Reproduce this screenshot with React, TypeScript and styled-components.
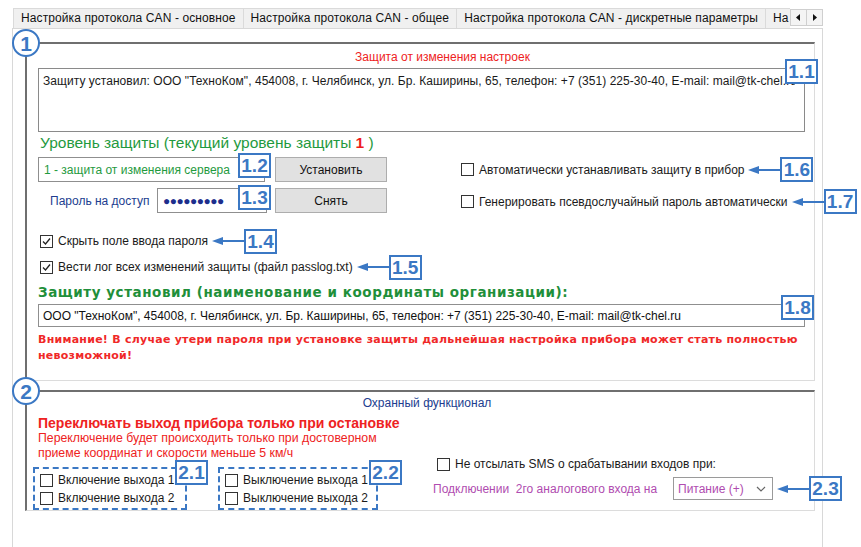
import React from 'react';
import styled, { createGlobalStyle } from 'styled-components';

const GlobalStyle = createGlobalStyle`
  html, body {
    margin: 0;
    padding: 0;
    background: #ffffff;
    font-family: 'Liberation Sans', Arial, sans-serif;
    font-size: 12px;
    color: #1a1a1a;
  }
`;

const accent = '#3b78c4';

const Page = styled.div`
  width: 861px;
  height: 547px;
  overflow: hidden;
  padding: 8px 0 0 12px;
  box-sizing: border-box;
`;

const TabStrip = styled.div`
  display: flex;
  align-items: flex-start;
  width: 811px;
  height: 20px;
`;

const TabRow = styled.div`
  display: flex;
  width: 777px;
  height: 20px;
  overflow: hidden;
  padding-left: 1px;
`;

const Tab = styled.div`
  flex: none;
  height: 19px;
  line-height: 19px;
  padding: 0 7px;
  background: #f0f0f0;
  border: 1px solid #dadada;
  border-bottom: none;
  margin-right: -1px;
  white-space: nowrap;
  letter-spacing: 0.1px;
  color: #111;
`;

const ScrollButtons = styled.div`
  display: flex;
  margin-top: 1px;
`;

const ScrollBtn = styled.div`
  width: 15px;
  height: 15px;
  border: 1px solid #cfcfcf;
  background: #f4f4f4;
  margin-right: -1px;
  display: flex;
  align-items: center;
  justify-content: center;
`;

const Panel = styled.div`
  width: 811px;
  height: 540px;
  box-sizing: border-box;
  border: 1px solid #d8d8d8;
  padding: 13px 7px 0 12px;
`;

const GroupBox = styled.section<{ $mb?: number }>`
  position: relative;
  border-top: 2px solid #6f6f6f;
  border-left: 2px solid #6f6f6f;
  border-right: 1px solid #dcdcdc;
  border-bottom: 1px solid #dcdcdc;
  padding: 0 9px 0 11px;
  margin-bottom: ${({ $mb }) => $mb ?? 0}px;
`;

const Marker = styled.div`
  position: absolute;
  left: -15px;
  top: -15px;
  width: 24px;
  height: 24px;
  border: 2px solid ${accent};
  border-radius: 50%;
  background: #fff;
  color: ${accent};
  font: bold 21px 'Liberation Sans', Arial, sans-serif;
  display: flex;
  align-items: center;
  justify-content: center;
  line-height: 1;
`;

const GroupTitle = styled.div<{ $color: string; $shift: number; $top: number }>`
  text-align: center;
  color: ${({ $color }) => $color};
  line-height: 14px;
  padding-top: ${({ $top }) => $top}px;
  padding-left: ${({ $shift }) => $shift}px;
`;

const Tag = styled.div`
  flex: none;
  width: 29px;
  height: 21px;
  border: 2px solid ${accent};
  background: #fff;
  color: ${accent};
  font: bold 19px 'Liberation Sans', Arial, sans-serif;
  line-height: 21px;
  text-align: center;
`;

const FloatTag = styled(Tag)<{ $right: number; $top: number }>`
  position: absolute;
  right: ${({ $right }) => $right}px;
  top: ${({ $top }) => $top}px;
`;

const Memo = styled.div`
  position: relative;
  margin-top: 4px;
  height: 64px;
  box-sizing: border-box;
  border: 1px solid #8a8a8a;
  padding: 5px 4px;
  white-space: nowrap;
  line-height: 14px;
`;

const MemoText = styled.div`
  overflow: hidden;
  width: 752px;
  letter-spacing: 0.05px;
`;

const LevelTitle = styled.div`
  margin-top: 3px;
  padding-left: 2px;
  font-size: 15.5px;
  line-height: 16px;
  color: #1f9a3e;
`;

const LevelNum = styled.b`
  color: #ee1c1c;
  font-weight: bold;
`;

const Columns = styled.div`
  display: grid;
  grid-template-columns: 423px 1fr;
  margin-top: 6px;
`;

const Stack = styled.div<{ $gap: number }>`
  display: flex;
  flex-direction: column;
  gap: ${({ $gap }) => $gap}px;
`;

const CheckStack = styled(Stack)`
  margin-top: 14px;
  padding-left: 2px;
`;

const FieldRow = styled.div<{ $gap: number }>`
  display: flex;
  align-items: center;
  gap: ${({ $gap }) => $gap}px;
`;

const Field = styled.div<{ $w: number; $h?: number; $color?: string }>`
  position: relative;
  width: ${({ $w }) => $w}px;
  height: ${({ $h }) => $h ?? 25}px;
  box-sizing: border-box;
  border: 1px solid #8f8f8f;
  background: #fff;
  display: flex;
  align-items: center;
  padding: 0 5px;
  color: ${({ $color }) => $color ?? '#111'};
  white-space: nowrap;
`;

const OrgField = styled(Field)`
  margin-top: 4px;
  padding: 0 4px;
`;

const Dots = styled.span`
  color: #1d2e8c;
  font-size: 12px;
  letter-spacing: -0.5px;
`;

const Button = styled.div`
  width: 112px;
  height: 25px;
  box-sizing: border-box;
  background: #e1e1e1;
  border: 1px solid #adadad;
  display: flex;
  align-items: center;
  justify-content: center;
  color: #111;
`;

const FieldLabel = styled.span<{ $color: string; $w: number; $pl?: number }>`
  color: ${({ $color }) => $color};
  white-space: nowrap;
  width: ${({ $w }) => $w}px;
  padding-left: ${({ $pl }) => $pl ?? 0}px;
`;

const CheckRow = styled.div<{ $h: number; $pl?: number }>`
  display: flex;
  align-items: center;
  height: ${({ $h }) => $h}px;
  padding-left: ${({ $pl }) => $pl ?? 0}px;
  white-space: nowrap;
`;

const Box = styled.span`
  flex: none;
  width: 13px;
  height: 13px;
  box-sizing: border-box;
  border: 1px solid #333;
  background: #fff;
  margin-right: 5px;
  display: flex;
  align-items: center;
  justify-content: center;
`;

const ArrowWrap = styled.span`
  display: flex;
  margin: 0 0 0 4px;
`;

const Heading = styled.div`
  margin-top: 4px;
  font: bold 13.5px 'DejaVu Sans', Verdana, sans-serif;
  line-height: 16px;
  color: #1f8f3a;
  letter-spacing: 0.55px;
`;

const Warning = styled.div`
  margin-top: 5px;
  padding-bottom: 16px;
  font: bold 11px 'DejaVu Sans', Verdana, sans-serif;
  line-height: 16px;
  color: #f02828;
  letter-spacing: 0.25px;
`;

const StopTitle = styled.div`
  margin-top: 5px;
  font-weight: bold;
  font-size: 14px;
  line-height: 16px;
  color: #ee2222;
`;

const StopNote = styled.div`
  color: #ee2222;
  line-height: 15px;
  font-size: 12.3px;
`;

const Outputs = styled.div`
  display: flex;
  gap: 31px;
  margin: 6px 0 0 -5px;
`;

const DashedBox = styled.div<{ $w: number }>`
  position: relative;
  width: ${({ $w }) => $w}px;
  height: 43px;
  box-sizing: border-box;
  border: 2px dashed ${accent};
  padding: 2px 0 0 5px;
`;

const Group2Body = styled.div`
  display: grid;
  grid-template-columns: 395px 1fr;
`;

const RightBottom = styled.div`
  display: flex;
  flex-direction: column;
  justify-content: flex-end;
  padding-bottom: 9px;
`;

const SelectRow = styled(FieldRow)`
  margin-top: 4px;
`;

const Select = styled.div`
  width: 100px;
  height: 23px;
  box-sizing: border-box;
  border: 1px solid #9a9a9a;
  display: flex;
  align-items: center;
  justify-content: space-between;
  padding: 0 6px 0 4px;
  color: #b04cb0;
`;

const Check = ({ on }: { on?: boolean }) => (
  <Box>
    {on && (
      <svg width="11" height="11" viewBox="0 0 11 11">
        <path d="M2 5.5 L4.5 8 L9 2.5" fill="none" stroke="#222" strokeWidth="1.3" />
      </svg>
    )}
  </Box>
);

const Arrow = ({ w }: { w: number }) => (
  <ArrowWrap>
    <svg width={w} height="10" viewBox={`0 0 ${w} 10`}>
      <line x1="8" y1="5" x2={w} y2="5" stroke={accent} strokeWidth="2" />
      <polygon points="0,5 11,1 11,9" fill={accent} />
    </svg>
  </ArrowWrap>
);

const Triangle = ({ dir }: { dir: 'l' | 'r' }) => (
  <svg width="5" height="7" viewBox="0 0 5 7">
    <polygon points={dir === 'l' ? '4,0 4,7 0,3.5' : '1,0 1,7 5,3.5'} fill="#111" />
  </svg>
);

export default function App() {
  return (
    <Page>
      <GlobalStyle />
      <TabStrip>
        <TabRow>
          <Tab>Настройка протокола CAN - основное</Tab>
          <Tab>Настройка протокола CAN - общее</Tab>
          <Tab>Настройка протокола CAN - дискретные параметры</Tab>
          <Tab>На</Tab>
        </TabRow>
        <ScrollButtons>
          <ScrollBtn><Triangle dir="l" /></ScrollBtn>
          <ScrollBtn><Triangle dir="r" /></ScrollBtn>
        </ScrollButtons>
      </TabStrip>

      <Panel>
        <GroupBox $mb={9}>
          <Marker>1</Marker>
          <GroupTitle $color="#ee2222" $shift={42} $top={6}>
            Защита от изменения настроек
          </GroupTitle>
          <Memo>
            <MemoText>
              Защиту установил: ООО "ТехноКом", 454008, г. Челябинск, ул. Бр. Каширины, 65, телефон: +7 (351) 225-30-40, E-mail: mail@tk-chel.ru
            </MemoText>
            <FloatTag $right={-14} $top={-10}>1.1</FloatTag>
          </Memo>

          <LevelTitle>
            Уровень защиты (текущий уровень защиты <LevelNum>1</LevelNum> )
          </LevelTitle>

          <Columns>
            <Stack $gap={6}>
              <FieldRow $gap={10}>
                <Field $w={227} $color="#1f9a3e">
                  1 - защита от изменения сервера
                  <FloatTag $right={-7} $top={-5}>1.2</FloatTag>
                </Field>
                <Button>Установить</Button>
              </FieldRow>
              <FieldRow $gap={8}>
                <FieldLabel $color="#213d8f" $w={99} $pl={12}>
                  Пароль на доступ
                </FieldLabel>
                <Field $w={110}>
                  <Dots>●●●●●●●●●</Dots>
                  <FloatTag $right={-5} $top={-4}>1.3</FloatTag>
                </Field>
                <Button>Снять</Button>
              </FieldRow>
            </Stack>
            <Stack $gap={7}>
              <CheckRow $h={25}>
                <Check />
                Автоматически устанавливать защиту в прибор
                <Arrow w={32} />
                <Tag>1.6</Tag>
              </CheckRow>
              <CheckRow $h={25}>
                <Check />
                Генерировать псевдослучайный пароль автоматически
                <Arrow w={32} />
                <Tag>1.7</Tag>
              </CheckRow>
            </Stack>
          </Columns>

          <CheckStack $gap={0}>
            <CheckRow $h={26}>
              <Check on />
              Скрыть поле ввода пароля
              <Arrow w={32} />
              <Tag>1.4</Tag>
            </CheckRow>
            <CheckRow $h={26}>
              <Check on />
              Вести лог всех изменений защиты (файл passlog.txt)
              <Arrow w={32} />
              <Tag>1.5</Tag>
            </CheckRow>
          </CheckStack>

          <Heading>Защиту установил (наименование и координаты организации):</Heading>
          <OrgField $w={767} $h={23}>
            ООО "ТехноКом", 454008, г. Челябинск, ул. Бр. Каширины, 65, телефон: +7 (351) 225-30-40, E-mail: mail@tk-chel.ru
            <FloatTag $right={-10} $top={-10}>1.8</FloatTag>
          </OrgField>
          <Warning>
            Внимание! В случае утери пароля при установке защиты дальнейшая настройка прибора может стать полностью невозможной!
          </Warning>
        </GroupBox>

        <GroupBox>
          <Marker>2</Marker>
          <GroupTitle $color="#213d8f" $shift={11} $top={4}>
            Охранный функционал
          </GroupTitle>
          <Group2Body>
            <div>
              <StopTitle>Переключать выход прибора только при остановке</StopTitle>
              <StopNote>
                Переключение будет происходить только при достоверном
                <br />
                приеме координат и скорости меньше 5 км/ч
              </StopNote>
              <Outputs>
                <DashedBox $w={154}>
                  <CheckRow $h={18}><Check />Включение выхода 1</CheckRow>
                  <CheckRow $h={18}><Check />Включение выхода 2</CheckRow>
                  <FloatTag $right={-23} $top={-9}>2.1</FloatTag>
                </DashedBox>
                <DashedBox $w={160}>
                  <CheckRow $h={18}><Check />Выключение выхода 1</CheckRow>
                  <CheckRow $h={18}><Check />Выключение выхода 2</CheckRow>
                  <FloatTag $right={-26} $top={-9}>2.2</FloatTag>
                </DashedBox>
              </Outputs>
            </div>
            <RightBottom>
              <CheckRow $h={16} $pl={4}>
                <Check />
                Не отсылать SMS о срабатывании входов при:
              </CheckRow>
              <SelectRow $gap={0}>
                <FieldLabel $color="#b04cb0" $w={240}>
                  Подключении&nbsp; 2го аналогового входа на
                </FieldLabel>
                <Select>
                  Питание (+)
                  <svg width="10" height="6" viewBox="0 0 10 6">
                    <path d="M1 1 L5 5 L9 1" fill="none" stroke="#666" strokeWidth="1.2" />
                  </svg>
                </Select>
                <Arrow w={32} />
                <Tag>2.3</Tag>
              </SelectRow>
            </RightBottom>
          </Group2Body>
        </GroupBox>
      </Panel>
    </Page>
  );
}
